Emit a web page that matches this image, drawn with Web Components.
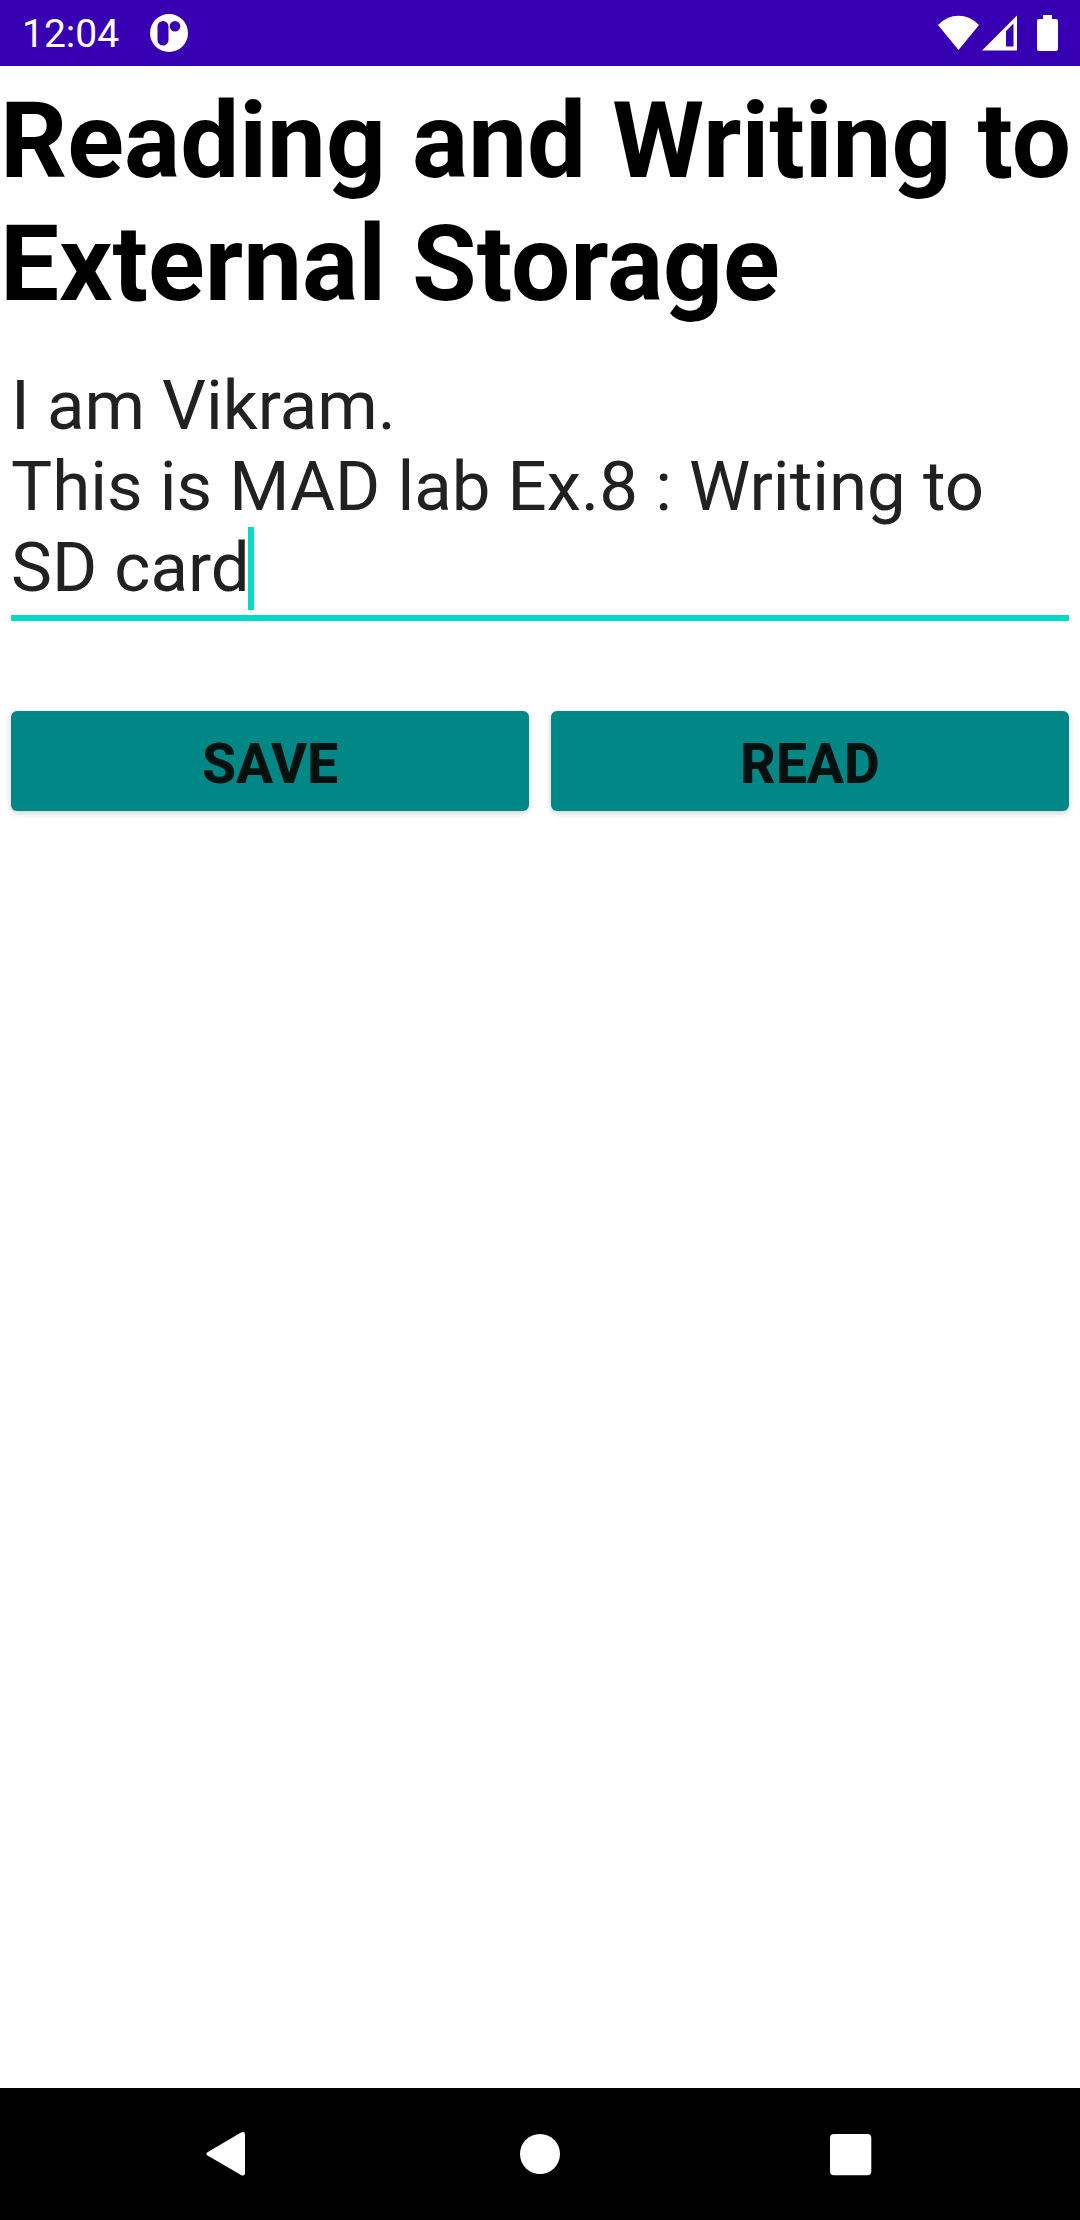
<!DOCTYPE html>
<html lang="en">
<head>
<meta charset="utf-8">
<meta name="viewport" content="width=device-width, initial-scale=1">
<title>External Storage</title>
<style>
  html, body { margin: 0; background: #fff; }
  body { font-family: Roboto, "Liberation Sans", sans-serif; }
</style>
</head>
<body>
<app-screen>
  <status-bar slot="top" time="12:04"></status-bar>
  <page-title>Reading and Writing to External Storage</page-title>
  <note-field label="Note" text="I am Vikram.&#10;This is MAD lab Ex.8 : Writing to SD card"></note-field>
  <action-row>
    <action-button>SAVE</action-button>
    <action-button>READ</action-button>
  </action-row>
  <nav-bar slot="bottom"></nav-bar>
</app-screen>

<script>
const define = (name, markup, ready) => {
  const template = document.createElement('template');
  template.innerHTML = markup;
  customElements.define(name, class extends HTMLElement {
    constructor() {
      super();
      this.attachShadow({ mode: 'open' }).append(template.content.cloneNode(true));
    }
    connectedCallback() {
      if (ready) ready(this, this.shadowRoot);
    }
  });
};

define('app-screen', `
  <style>
    :host { display: flex; flex-direction: column; min-height: 100vh; }
    main { flex: 1; display: flex; flex-direction: column; padding-top: 14px; }
  </style>
  <slot name="top"></slot>
  <main><slot></slot></main>
  <slot name="bottom"></slot>
`);

define('status-bar', `
  <style>
    :host { display: flex; align-items: center; justify-content: space-between;
            height: 66px; padding: 0 22px; background: #3700b3; color: #fff; }
    .group { display: flex; align-items: center; }
    .start { gap: 30px; }
    time { padding-top: 2px; font-size: 39px; line-height: 46px; }
    svg { display: block; fill: currentColor; }
    .wifi { margin-right: 3px; }
    .signal { margin-right: 20px; }
  </style>
  <div class="group start">
    <time></time>
    <svg width="40" height="40" viewBox="0 0 40 40" aria-hidden="true">
      <path fill-rule="evenodd" d="M20 1a19 19 0 1 0 0 38a19 19 0 1 0 0-38zM14 8a5.500 5.500 0 0 1 5.500 5.500v13.500a5.500 5.500 0 0 1-11 0v-13.500a5.500 5.500 0 0 1 5.500-5.500zM26 8a5.300 5.300 0 1 1 0 10.600a5.300 5.300 0 1 1 0-10.600z"/>
    </svg>
  </div>
  <div class="group">
    <svg class="wifi" width="41" height="36" viewBox="0 0 41 36" aria-hidden="true">
      <path d="M20.500 35L0 10Q9 .8 20.500 .8T41 10z"/>
    </svg>
    <svg class="signal" width="35" height="36" viewBox="0 0 35 36" aria-hidden="true">
      <path fill-rule="evenodd" d="M0 35.500L35 .5v35zM24 16v15.500h7.500V8.500z"/>
    </svg>
    <svg width="21" height="36" viewBox="0 0 21 36" aria-hidden="true">
      <path d="M6 0h9v4h4a2 2 0 0 1 2 2v28a2 2 0 0 1-2 2H2a2 2 0 0 1-2-2V6a2 2 0 0 1 2-2h4z"/>
    </svg>
  </div>
`, (host, root) => { root.querySelector('time').textContent = host.getAttribute('time'); });

define('page-title', `
  <style>
    :host { display: block; }
    h1 { margin: 0; font-size: 105px; line-height: 123px; font-weight: 700; color: #000; }
  </style>
  <h1><slot></slot></h1>
`);

define('note-field', `
  <style>
    :host { display: block; position: relative; margin: 39px 11px 0; }
    textarea { display: block; box-sizing: border-box; width: 100%; margin: 0; padding: 0 0 7px;
               border: 0; border-bottom: 6px solid #03dac5; border-radius: 0; outline: 0;
               background: none; resize: none; overflow: hidden; field-sizing: content;
               font: 400 69px/81px Roboto, "Liberation Sans", sans-serif;
               color: #212121; caret-color: #03dac5; }
    .caret { position: absolute; left: 237px; bottom: 11px; width: 6px; height: 83px;
             background: #03dac5; pointer-events: none; }
  </style>
  <textarea rows="3" spellcheck="false"></textarea>
  <span class="caret"></span>
`, (host, root) => {
  const area = root.querySelector('textarea');
  area.value = host.getAttribute('text');
  area.setAttribute('aria-label', host.getAttribute('label'));
});

define('action-row', `
  <style>
    :host { display: grid; grid-template-columns: 1fr 1fr; gap: 22px; margin: 90px 11px 0; }
  </style>
  <slot></slot>
`);

define('action-button', `
  <style>
    :host { display: block; }
    button { display: block; width: 100%; height: 100px; margin: 0; padding: 6px 0 0; border: 0;
             border-radius: 6px; background: #018786; color: #001110;
             box-shadow: 0 2px 6px rgba(0, 0, 0, .2);
             font: 800 55px/64px Roboto, "Liberation Sans", sans-serif; }
  </style>
  <button type="button"><slot></slot></button>
`);

define('nav-bar', `
  <style>
    :host { display: block; background: #000; }
    nav { display: grid; grid-template-columns: repeat(3, 1fr); height: 132px; padding: 0 72px; }
    button { display: flex; align-items: center; justify-content: center;
             margin: 0; padding: 0; border: 0; background: none; color: #fff; }
    svg { display: block; fill: currentColor; }
  </style>
  <nav>
    <button type="button" aria-label="Back">
      <svg width="48" height="48" viewBox="0 0 48 48">
        <path d="M3.500 22.300L37 2.500Q41 .8 41 5v37.500Q41 46.800 37 45L3.500 25.500Q1.200 23.900 3.500 22.300z"/>
      </svg>
    </button>
    <button type="button" aria-label="Home">
      <svg width="48" height="48" viewBox="0 0 48 48"><circle cx="24" cy="24" r="20"/></svg>
    </button>
    <button type="button" aria-label="Overview">
      <svg width="48" height="48" viewBox="0 0 48 48"><rect x="2" y="4" width="41.300" height="41.300" rx="4"/></svg>
    </button>
  </nav>
`);
</script>
</body>
</html>
